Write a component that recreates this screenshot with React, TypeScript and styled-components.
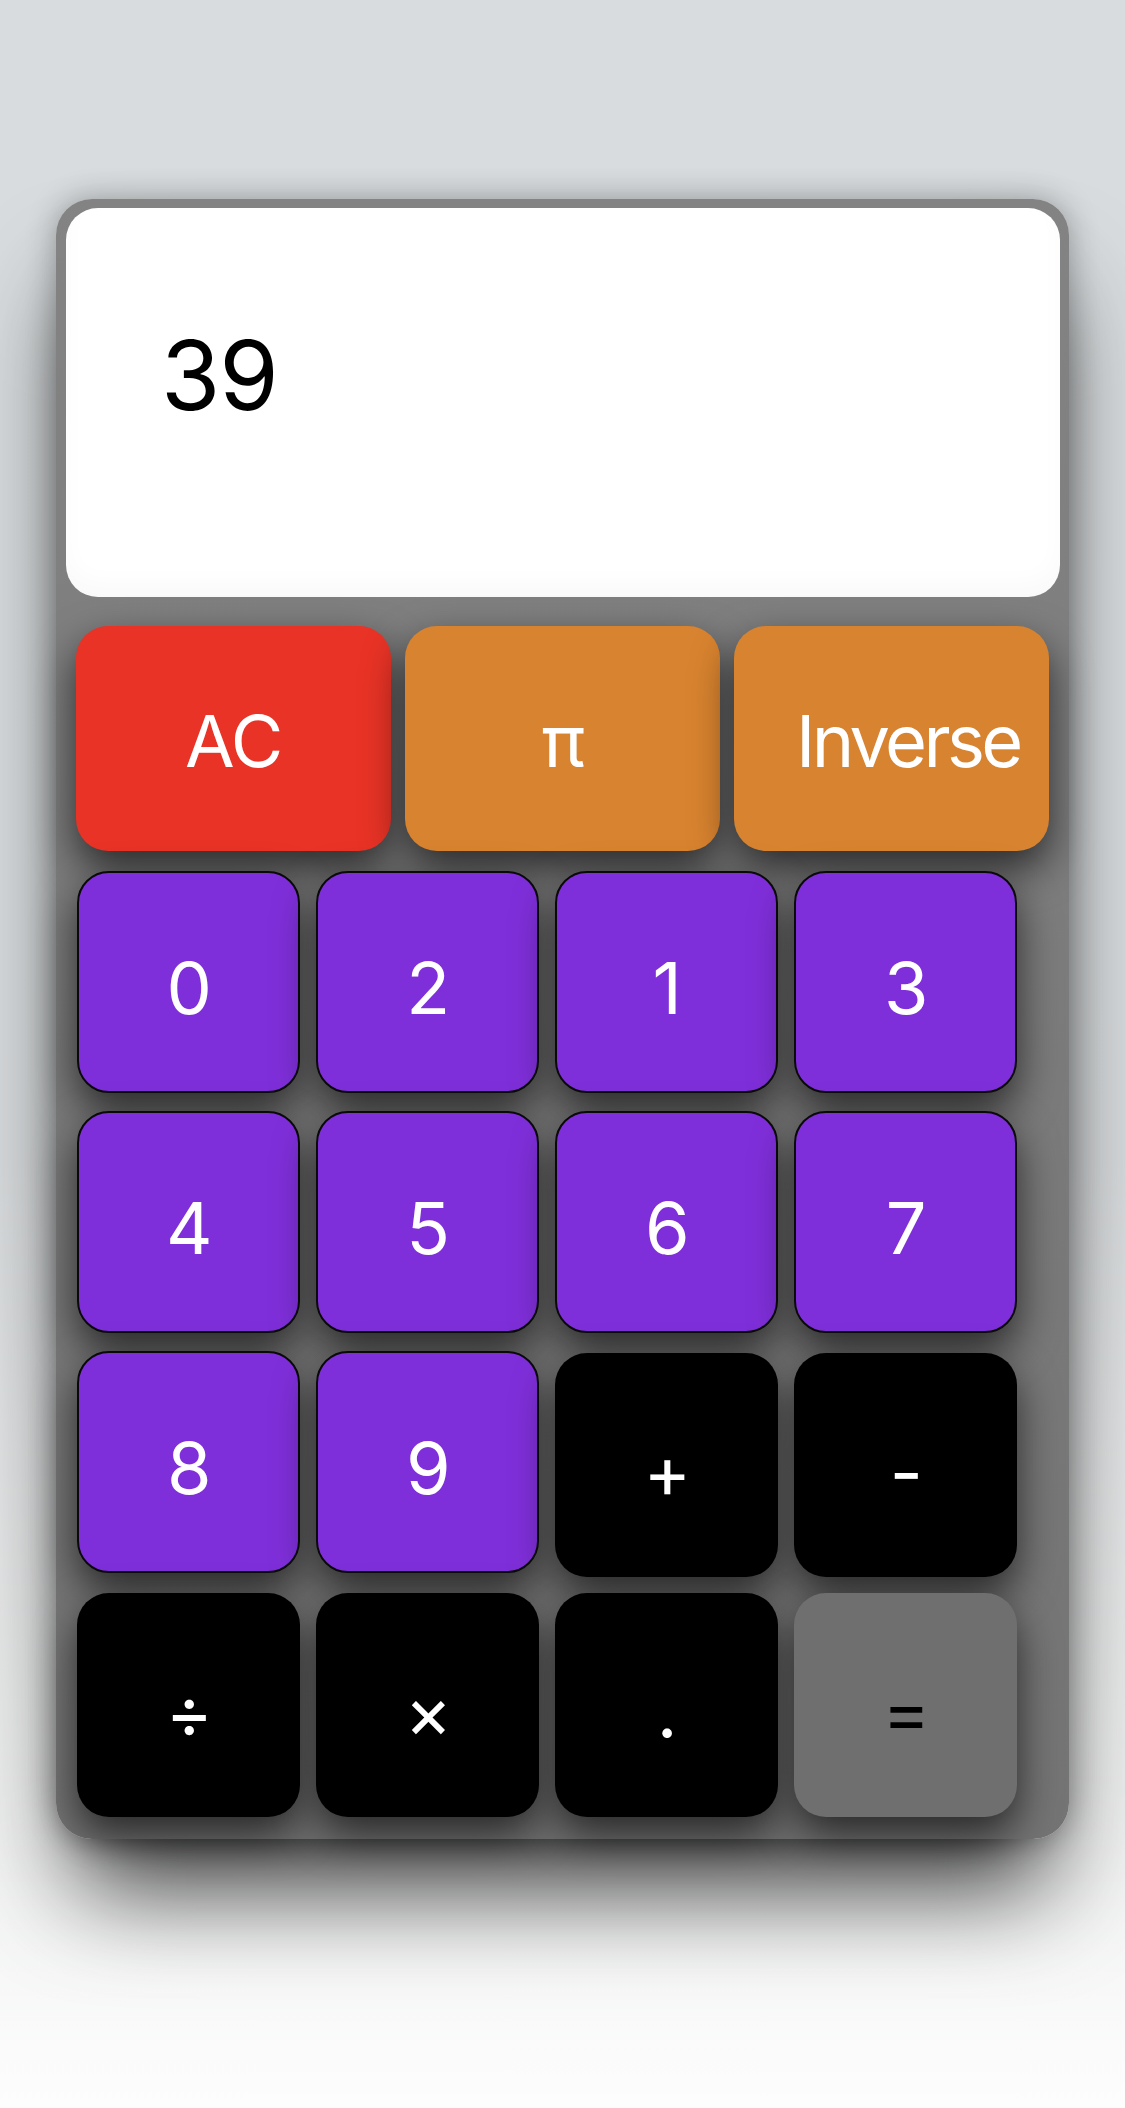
import React from "react";
import styled, { createGlobalStyle, css } from "styled-components";

type Variant = "clear" | "constant" | "digit" | "operator" | "equals";

const GlobalStyle = createGlobalStyle`
  html, body {
    margin: 0;
    padding: 0;
  }
  body {
    min-height: 100vh;
    background: linear-gradient(
      to bottom,
      #d8dcde 0%,
      #d9dcde 55%,
      #ebecec 80%,
      #fdfdfd 100%
    );
    font-family: Inter, "Noto Sans", "Liberation Sans", sans-serif;
  }
`;

const Page = styled.main`
  min-height: 2108px;
  box-sizing: border-box;
  padding: 199px 56px 0;
`;

const Calculator = styled.div`
  width: 1013px;
  box-sizing: border-box;
  padding: 9px 9px 26px 10px;
  border-radius: 36px;
  background: linear-gradient(to bottom, #838383, #747474);
  box-shadow: 0 70px 100px -20px rgba(0, 0, 0, 0.75),
    0 0 30px rgba(0, 0, 0, 0.3);
`;

const Display = styled.div`
  height: 389px;
  box-sizing: border-box;
  padding: 109px 0 0 95px;
  border-radius: 32px;
  background: #ffffff;
  box-shadow: inset 0 -14px 24px rgba(0, 0, 0, 0.025);
  color: #000000;
  font-size: 96px;
  line-height: normal;
  letter-spacing: -0.01em;
`;

const Keypad = styled.div`
  display: flex;
  flex-direction: column;
  gap: 20px;
  padding: 29px 0 0 10px;
`;

const TopRow = styled.div`
  display: grid;
  grid-template-columns: repeat(3, 315px);
  grid-auto-rows: 225px;
  column-gap: 14px;
`;

const KeyGrid = styled.div`
  display: grid;
  grid-template-columns: repeat(4, 223px);
  grid-auto-rows: 222px;
  column-gap: 16px;
  row-gap: 18px;
  margin-left: 1px;
`;

const variantStyles: Record<Variant, ReturnType<typeof css>> = {
  clear: css`
    background: #e83326;
    padding-top: 4px;
  `,
  constant: css`
    background: #d8832f;
    padding-top: 4px;
  `,
  digit: css`
    background: #7f2fd9;
    border: 2px solid #0a0a0a;
    padding-top: 10px;
  `,
  operator: css`
    background: #000000;
    height: 224px;
    margin-top: 2px;
    padding-top: 12px;
  `,
  equals: css`
    background: #6f6f6f;
    color: #000000;
    height: 224px;
    margin-top: 2px;
    padding-top: 12px;
  `,
};

const Key = styled.button<{ $variant: Variant; $startLabel?: boolean }>`
  appearance: none;
  margin: 0;
  border: none;
  box-sizing: border-box;
  width: 100%;
  height: 100%;
  display: flex;
  align-items: center;
  justify-content: center;
  padding-left: 0;
  padding-right: 0;
  padding-bottom: 0;
  border-radius: 32px;
  color: #ffffff;
  font-family: inherit;
  font-size: 72px;
  font-weight: 400;
  line-height: normal;
  letter-spacing: -0.02em;
  white-space: nowrap;
  cursor: pointer;
  box-shadow: 0 18px 40px rgba(0, 0, 0, 0.66);
  ${({ $variant }) => variantStyles[$variant]}
  ${({ $startLabel }) =>
    $startLabel &&
    css`
      justify-content: flex-start;
      padding-left: 62px;
      letter-spacing: -0.05em;
    `}
`;

const topKeys: { label: string; variant: Variant; start?: boolean }[] = [
  { label: "AC", variant: "clear" },
  { label: "π", variant: "constant" },
  { label: "Inverse", variant: "constant", start: true },
];

const gridKeys: { label: string; variant: Variant }[] = [
  { label: "0", variant: "digit" },
  { label: "2", variant: "digit" },
  { label: "1", variant: "digit" },
  { label: "3", variant: "digit" },
  { label: "4", variant: "digit" },
  { label: "5", variant: "digit" },
  { label: "6", variant: "digit" },
  { label: "7", variant: "digit" },
  { label: "8", variant: "digit" },
  { label: "9", variant: "digit" },
  { label: "+", variant: "operator" },
  { label: "-", variant: "operator" },
  { label: "÷", variant: "operator" },
  { label: "×", variant: "operator" },
  { label: ".", variant: "operator" },
  { label: "=", variant: "equals" },
];

export default function App() {
  return (
    <>
      <GlobalStyle />
      <Page>
        <Calculator>
          <Display>39</Display>
          <Keypad>
            <TopRow>
              {topKeys.map((k) => (
                <Key key={k.label} $variant={k.variant} $startLabel={k.start}>
                  {k.label}
                </Key>
              ))}
            </TopRow>
            <KeyGrid>
              {gridKeys.map((k) => (
                <Key key={k.label} $variant={k.variant}>
                  {k.label}
                </Key>
              ))}
            </KeyGrid>
          </Keypad>
        </Calculator>
      </Page>
    </>
  );
}
